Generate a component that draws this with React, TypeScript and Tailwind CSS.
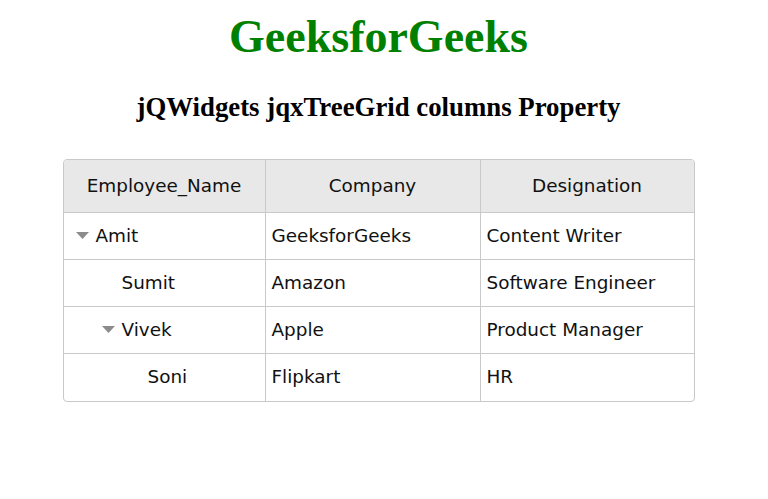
type Row = {
  name: string;
  company: string;
  designation: string;
  level: number;
  expander: boolean;
};

const rows: Row[] = [
  { name: "Amit", company: "GeeksforGeeks", designation: "Content Writer", level: 0, expander: true },
  { name: "Sumit", company: "Amazon", designation: "Software Engineer", level: 1, expander: false },
  { name: "Vivek", company: "Apple", designation: "Product Manager", level: 1, expander: true },
  { name: "Soni", company: "Flipkart", designation: "HR", level: 2, expander: false },
];

// indent spacers for each nesting level
const indents = ["w-0", "w-[26px]", "w-[52px]"];

function Caret({ show }: { show: boolean }) {
  return (
    <span className="w-[20px] h-[10px] flex items-center">
      {show && (
        <svg width="13" height="7" viewBox="0 0 13 7">
          <polygon points="0,0 13,0 6.5,7" fill="#8c8c8c" />
        </svg>
      )}
    </span>
  );
}

export default function App() {
  return (
    <div className="bg-white min-h-[499px] text-black">
      <div className="w-[757px]">
        <h1 className="text-center text-[46px] font-bold text-[#008000] font-['Liberation_Serif',serif] leading-none pt-[14px]">
          GeeksforGeeks
        </h1>
        <h3 className="text-center text-[26.8px] font-bold font-['Liberation_Serif',serif] leading-none mt-[34px]">
          jQWidgets jqxTreeGrid columns Property
        </h3>

        <div className="mx-auto mt-[38px] w-[632px] border border-[#c9c9c9] rounded-[4px] overflow-hidden font-['DejaVu_Sans',Verdana,sans-serif] text-[18.4px] text-[#111]">
          <div className="grid grid-cols-[202px_215px_1fr] h-[53px] bg-[#e8e8e8] border-b border-[#c9c9c9]">
            <div className="flex items-center justify-center border-r border-[#c9c9c9]">Employee_Name</div>
            <div className="flex items-center justify-center border-r border-[#c9c9c9]">Company</div>
            <div className="flex items-center justify-center">Designation</div>
          </div>
          {rows.map((r, i) => (
            <div
              key={r.name}
              className={`grid grid-cols-[202px_215px_1fr] h-[47px] ${i < rows.length - 1 ? "border-b border-[#c9c9c9]" : ""}`}
            >
              <div className="flex items-center pl-[12px] border-r border-[#c9c9c9]">
                <span className={indents[r.level]} />
                <Caret show={r.expander} />
                <span>{r.name}</span>
              </div>
              <div className="flex items-center pl-[6px] border-r border-[#c9c9c9]">{r.company}</div>
              <div className="flex items-center pl-[6px]">{r.designation}</div>
            </div>
          ))}
        </div>
      </div>
    </div>
  );
}
